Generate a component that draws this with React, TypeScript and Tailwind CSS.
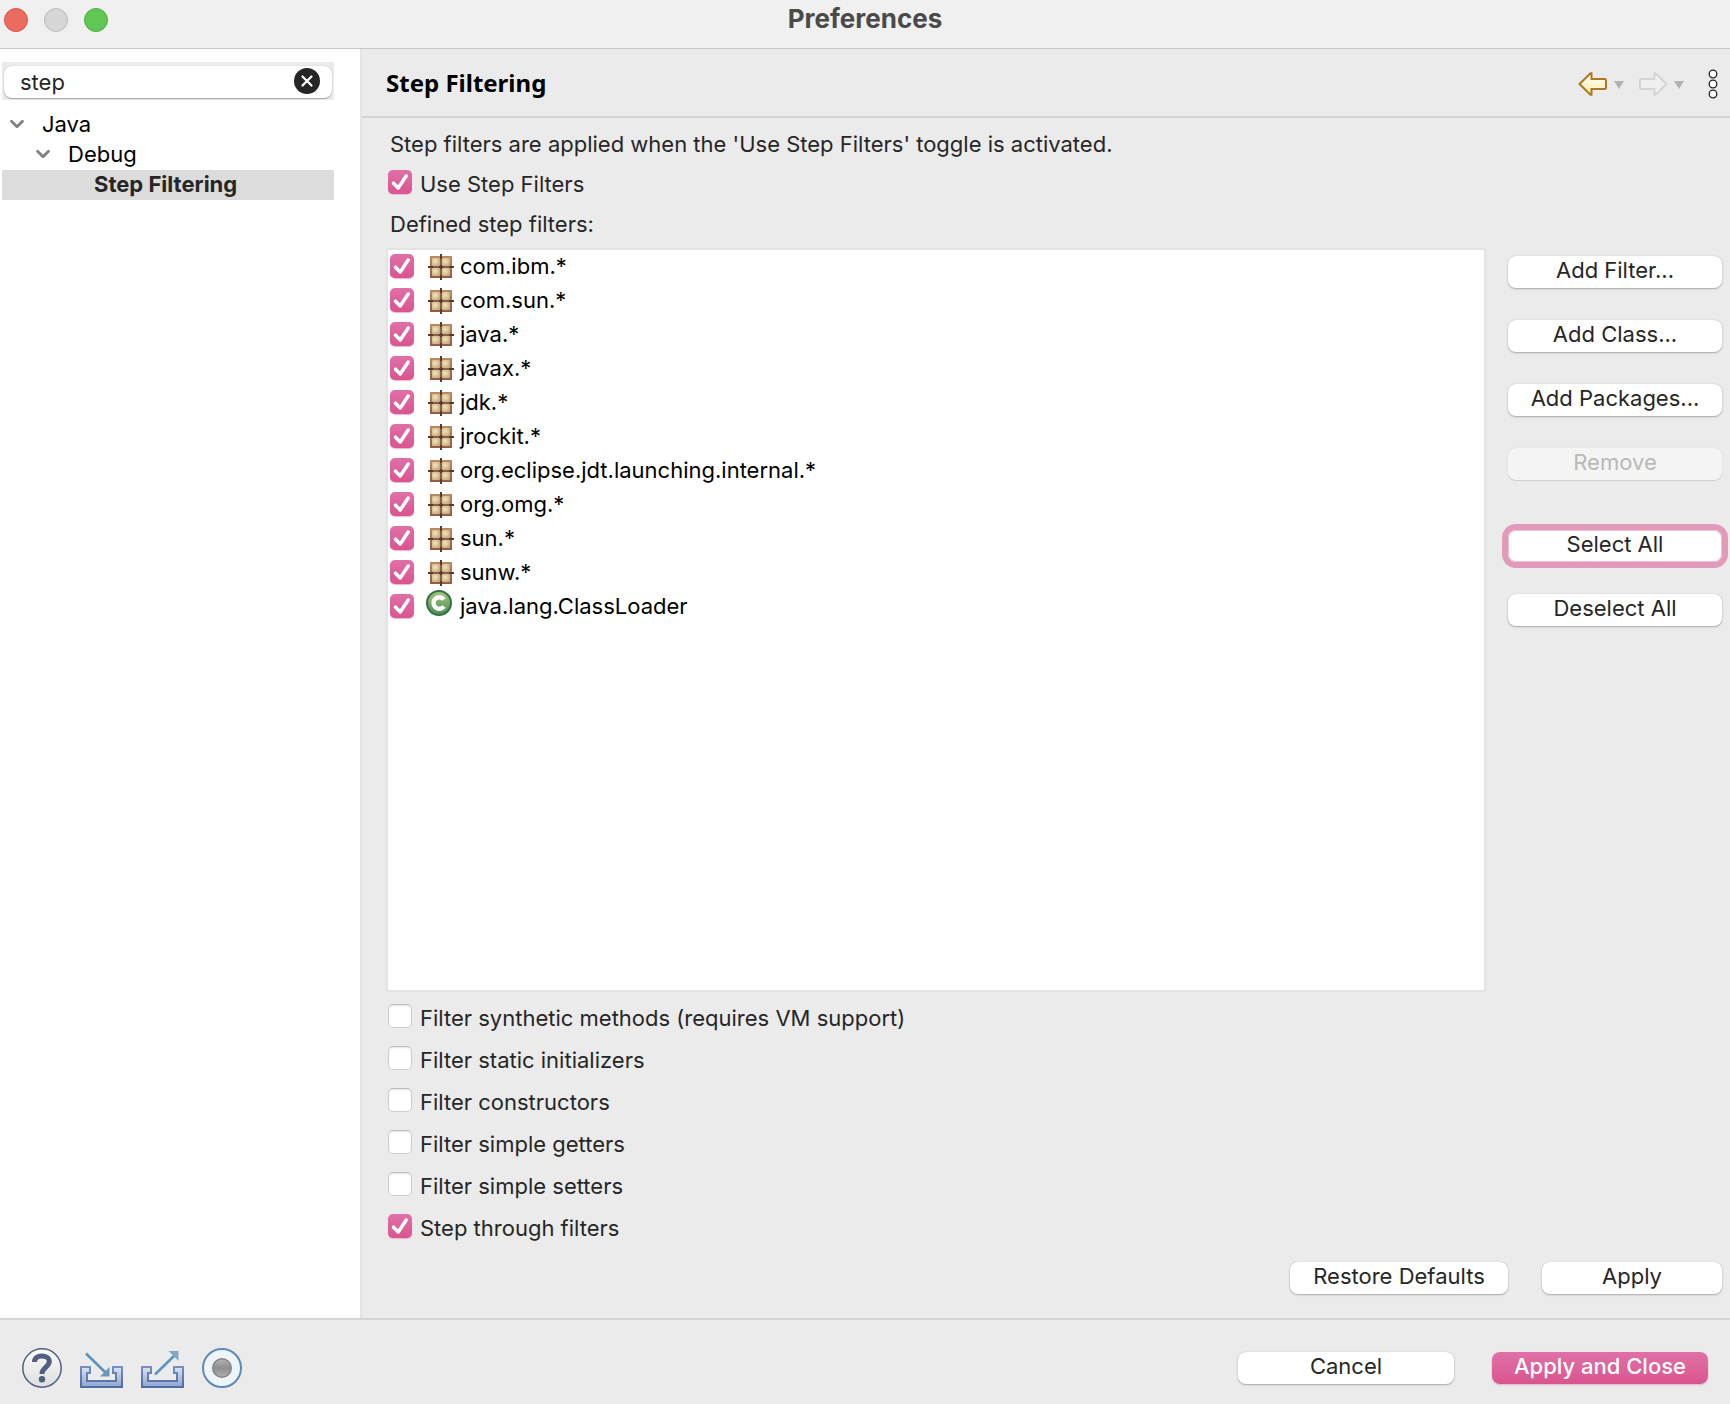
import React, { useState } from "react";
import { ChevronDown, X } from "lucide-react";
import clsx from "clsx";

type StepFilter = {
  name: string;
  kind: "package" | "class";
  checked: boolean;
};

type Option = {
  id: string;
  label: string;
  checked: boolean;
};

const initialFilters: StepFilter[] = [
  { name: "com.ibm.*", kind: "package", checked: true },
  { name: "com.sun.*", kind: "package", checked: true },
  { name: "java.*", kind: "package", checked: true },
  { name: "javax.*", kind: "package", checked: true },
  { name: "jdk.*", kind: "package", checked: true },
  { name: "jrockit.*", kind: "package", checked: true },
  { name: "org.eclipse.jdt.launching.internal.*", kind: "package", checked: true },
  { name: "org.omg.*", kind: "package", checked: true },
  { name: "sun.*", kind: "package", checked: true },
  { name: "sunw.*", kind: "package", checked: true },
  { name: "java.lang.ClassLoader", kind: "class", checked: true },
];

const initialOptions: Option[] = [
  { id: "synthetic", label: "Filter synthetic methods (requires VM support)", checked: false },
  { id: "static", label: "Filter static initializers", checked: false },
  { id: "constructors", label: "Filter constructors", checked: false },
  { id: "getters", label: "Filter simple getters", checked: false },
  { id: "setters", label: "Filter simple setters", checked: false },
  { id: "through", label: "Step through filters", checked: true },
];

const PackageIcon = () => (
  <svg viewBox="0 0 32 32" className="size-8 shrink-0" aria-hidden="true">
    <defs>
      <linearGradient id="pkg-frame" x1="0" y1="0" x2="0" y2="1">
        <stop offset="0" stopColor="#bb8a64" />
        <stop offset="1" stopColor="#905c47" />
      </linearGradient>
      <radialGradient id="pkg-cell" cx="0.4" cy="0.4" r="0.7">
        <stop offset="0" stopColor="#f2e7b9" />
        <stop offset="1" stopColor="#c4a679" />
      </radialGradient>
    </defs>
    <rect x="4" y="6" width="22" height="22" fill="url(#pkg-frame)" />
    <rect x="6" y="8" width="8" height="8" fill="url(#pkg-cell)" />
    <rect x="16" y="8" width="8" height="8" fill="url(#pkg-cell)" />
    <rect x="6" y="18" width="8" height="8" fill="url(#pkg-cell)" />
    <rect x="16" y="18" width="8" height="8" fill="url(#pkg-cell)" />
    <path d="M15 6v22M4 17h22" stroke="#85604a" strokeWidth="2" />
    <path d="M15 4v5M15 25v5M2 17h5M23 17h5M13 17h4M15 15v4" stroke="#5a3a2e" strokeWidth="2" />
  </svg>
);

const ClassIcon = () => (
  <svg viewBox="0 0 32 32" className="size-8 shrink-0" aria-hidden="true">
    <defs>
      <linearGradient id="class-fill" x1="0" y1="0" x2="0" y2="1">
        <stop offset="0" stopColor="#a5c77c" />
        <stop offset="1" stopColor="#4d8c56" />
      </linearGradient>
    </defs>
    <circle cx="13" cy="13" r="12" fill="url(#class-fill)" stroke="#33704a" strokeWidth="2" />
    <path d="M18 9.5A5.800 5.800 0 1 0 18 16.500" fill="none" stroke="#fff" strokeWidth="4.400" />
  </svg>
);

const BackIcon = () => (
  <svg viewBox="0 0 30 24" className="h-6 w-[30px]" aria-hidden="true">
    <defs>
      <linearGradient id="back-fill" x1="0" y1="0" x2="0" y2="1">
        <stop offset="0" stopColor="#fffef2" />
        <stop offset="1" stopColor="#fbeeb4" />
      </linearGradient>
    </defs>
    <path
      d="M1.5 12 12.5 1.2h1V7H26.5q1.5 0 1.5 1.5v7q0 1.5-1.5 1.5H13.500v5.800h-1z"
      fill="url(#back-fill)"
      stroke="#ad7720"
      strokeWidth="2"
    />
  </svg>
);

const ForwardIcon = () => (
  <svg viewBox="0 0 30 24" className="h-6 w-[30px]" aria-hidden="true">
    <path
      d="M28.5 12 17.5 1.2h-1V7H3.500Q2 7 2 8.500v7Q2 17 3.500 17H16.500v5.800h1z"
      fill="#efefef"
      stroke="#d4d4d4"
      strokeWidth="2"
    />
  </svg>
);

const TriangleIcon = () => (
  <svg viewBox="0 0 10 8" className="mt-[3px] h-2 w-2.5" aria-hidden="true">
    <path d="M0 0h10L5 8z" fill="#b2b2b2" />
  </svg>
);

const MenuDotsIcon = () => (
  <svg viewBox="0 0 10 30" className="h-[30px] w-2.5" aria-hidden="true">
    <g fill="#fff" stroke="#222" strokeWidth="1.3">
      <circle cx="5" cy="5" r="3.8" />
      <circle cx="5" cy="15" r="3.8" />
      <circle cx="5" cy="25" r="3.8" />
    </g>
  </svg>
);

const HelpIcon = () => (
  <svg viewBox="0 0 40 40" className="size-10" aria-hidden="true">
    <defs>
      <linearGradient id="help-fill" x1="0" y1="0" x2="0" y2="1">
        <stop offset="0" stopColor="#fbfbfb" />
        <stop offset="1" stopColor="#dedede" />
      </linearGradient>
    </defs>
    <circle cx="20" cy="20" r="19.2" fill="url(#help-fill)" stroke="#525f80" strokeWidth="1.5" />
    <path
      d="M12.500 14C12.500 10 15.500 8 19.800 8c4.400 0 7.500 2 7.500 5.600 0 5.400-7.300 5.800-7.300 12.400"
      fill="none"
      stroke="#525f80"
      strokeWidth="5"
    />
    <circle cx="20" cy="31.2" r="3.2" fill="#525f80" />
  </svg>
);

const TrayIcon = ({ direction }: { direction: "in" | "out" }) => (
  <svg viewBox="0 0 43 40" className="h-10 w-[43px]" aria-hidden="true">
    <defs>
      <linearGradient id="tray-fill" x1="0" y1="0" x2="0" y2="1">
        <stop offset="0" stopColor="#dbe3f1" />
        <stop offset="1" stopColor="#8fa4cf" />
      </linearGradient>
      <linearGradient id="tray-edge" x1="0" y1="0" x2="0" y2="1">
        <stop offset="0" stopColor="#788ebf" />
        <stop offset="1" stopColor="#4f6ba4" />
      </linearGradient>
    </defs>
    <path
      d="M1 19h9v6H7V33H36V25H33V19h9v20H1z"
      fill="url(#tray-fill)"
      stroke="url(#tray-edge)"
      strokeWidth="2"
    />
    {direction === "in" ? (
      <>
        <path d="M6 5.500 26 25" stroke="#5a92c2" strokeWidth="2.500" />
        <path d="M29.500 28.500V19L20 28.500z" fill="#6e97b8" />
      </>
    ) : (
      <>
        <path d="M14 26.500 34 7" stroke="#5a92c2" strokeWidth="2.500" />
        <path d="M37.500 3v10L27.500 3z" fill="#83a8c4" />
      </>
    )}
  </svg>
);

const RecordIcon = () => (
  <svg viewBox="0 0 40 40" className="size-10" aria-hidden="true">
    <defs>
      <linearGradient id="record-fill" x1="0" y1="0" x2="0" y2="1">
        <stop offset="0" stopColor="#b5b5b5" />
        <stop offset="0.5" stopColor="#8e8e8e" />
        <stop offset="1" stopColor="#b0b0b0" />
      </linearGradient>
    </defs>
    <circle cx="20" cy="20" r="19" fill="#eef5fa" stroke="#5f88b3" strokeWidth="2" />
    <circle cx="20" cy="20" r="9.3" fill="url(#record-fill)" stroke="#858585" strokeWidth="1.5" />
  </svg>
);

type CheckboxProps = {
  id: string;
  checked: boolean;
  onChange: () => void;
};

const Checkbox: React.FC<CheckboxProps> = ({ id, checked, onChange }) => (
  <span className="grid size-6 shrink-0 place-items-center">
    <input
      id={id}
      type="checkbox"
      checked={checked}
      onChange={onChange}
      className="col-start-1 row-start-1 size-6 appearance-none rounded-[5px] border border-[#cfcfcf] border-t-[#bdbdbd] bg-white shadow-[inset_0_1px_2px_#e2e2e2] checked:border-0 checked:bg-linear-to-b checked:from-[#e070a7] checked:to-[#d9548f] checked:shadow-[0_1px_1px_#e9b5cf]"
    />
    {checked && (
      <svg viewBox="0 0 24 24" className="pointer-events-none col-start-1 row-start-1 size-6" aria-hidden="true">
        <path
          d="M5.500 13.200 10.200 18 18.200 6"
          fill="none"
          stroke="#fff"
          strokeWidth="3.500"
          strokeLinecap="round"
          strokeLinejoin="round"
        />
      </svg>
    )}
  </span>
);

type PushButtonProps = React.ButtonHTMLAttributes<HTMLButtonElement> & {
  primary?: boolean;
  focused?: boolean;
};

const PushButton: React.FC<PushButtonProps> = ({ primary, focused, className, ...rest }) => (
  <button
    type="button"
    className={clsx(
      "h-8 rounded-lg pb-1 text-[22px] leading-7",
      primary
        ? "bg-linear-to-b from-[#e070a7] to-[#d9548f] font-medium text-white shadow-[0_1px_2px_#d9b3c6]"
        : "bg-white text-[#262626] disabled:bg-[#f4f4f4] disabled:text-[#b8b8b8]",
      !primary && !focused && "shadow-[0_0_1px_#b0b0b0,0_1px_2px_#a8a8a8] disabled:shadow-[0_0_1px_#c8c8c8,0_1px_1px_#cfcfcf]",
      focused && "shadow-[inset_0_0_0_1px_#efbdd5] ring-6 ring-[#e29aba]",
      className
    )}
    {...rest}
  />
);

export default function App() {
  const [query, setQuery] = useState("step");
  const [useFilters, setUseFilters] = useState(true);
  const [filters, setFilters] = useState(initialFilters);
  const [options, setOptions] = useState(initialOptions);

  const setAll = (checked: boolean) => setFilters(filters.map((f) => ({ ...f, checked })));

  const toggleFilter = (name: string) =>
    setFilters(filters.map((f) => (f.name === name ? { ...f, checked: !f.checked } : f)));

  const toggleOption = (id: string) =>
    setOptions(options.map((o) => (o.id === id ? { ...o, checked: !o.checked } : o)));

  return (
    <div className="flex min-h-screen flex-col bg-[#ebebeb] font-['Inter',sans-serif] text-[22px] leading-7 text-[#262626]">
      <header className="grid h-[49px] grid-cols-[1fr_auto_1fr] items-start border-b border-[#c8c8c8] bg-[#f0f0f0]">
        <div className="flex gap-4 pt-2 pl-1">
          <button type="button" aria-label="Close" className="size-6 rounded-full border border-[#d2524a] bg-[#ec6b5f]" />
          <button type="button" aria-label="Minimize" className="size-6 rounded-full border border-[#b9b9b9] bg-[#d6d6d6]" />
          <button type="button" aria-label="Zoom" className="size-6 rounded-full border border-[#4cae3d] bg-[#62c655]" />
        </div>
        <h1 className="pt-[3px] text-[26px] leading-8 font-bold text-[#4a4a4a]">Preferences</h1>
      </header>

      <div className="flex flex-1">
        <aside className="w-[362px] shrink-0 border-r-2 border-[#e4e4e4] bg-white px-[2px] pt-[13px]">
          <div className="mr-6 bg-[#ebebeb] px-[2px] pt-1 pb-[2px]">
            <div className="flex h-8 items-center rounded-lg bg-white pr-3 pl-4 shadow-[0_0_1px_#a8a8a8,0_1px_1px_#a8a8a8]">
              <input
                type="text"
                aria-label="Filter preferences"
                value={query}
                onChange={(e) => setQuery(e.target.value)}
                className="min-w-0 flex-1 bg-transparent outline-none"
              />
              <button
                type="button"
                aria-label="Clear"
                onClick={() => setQuery("")}
                className="mb-[2px] flex size-[26px] items-center justify-center rounded-full bg-[#262626] text-white"
              >
                <X size={18} strokeWidth={3} />
              </button>
            </div>
          </div>

          <ul className="mt-2.5 mr-6 text-black">
            <li>
              <div className="flex h-[30px] items-center gap-3.5 pb-[2px] pl-1">
                <ChevronDown size={22} strokeWidth={3} className="text-[#808080]" />
                Java
              </div>
              <ul>
                <li>
                  <div className="flex h-[30px] items-center gap-3.5 pb-[2px] pl-[30px]">
                    <ChevronDown size={22} strokeWidth={3} className="text-[#808080]" />
                    Debug
                  </div>
                  <ul>
                    <li className="h-[30px] bg-[#dcdcdc] pb-[2px] pl-[92px] font-bold text-[#262626]">Step Filtering</li>
                  </ul>
                </li>
              </ul>
            </li>
          </ul>
        </aside>

        <main className="flex min-w-0 flex-1 flex-col">
          <div className="flex h-[69px] items-center justify-between border-b-2 border-[#d4d4d4] pr-3 pl-6">
            <h2 className="font-['Noto_Sans',sans-serif] text-2xl leading-8 font-bold text-black">Step Filtering</h2>
            <div className="flex items-center pt-[2px]">
              <button type="button" aria-label="Back">
                <BackIcon />
              </button>
              <button type="button" aria-label="Back history" className="ml-1.5">
                <TriangleIcon />
              </button>
              <button type="button" aria-label="Forward" disabled className="ml-3.5">
                <ForwardIcon />
              </button>
              <button type="button" aria-label="Forward history" className="ml-1.5">
                <TriangleIcon />
              </button>
              <button type="button" aria-label="View menu" className="ml-6">
                <MenuDotsIcon />
              </button>
            </div>
          </div>

          <div className="flex flex-1 flex-col pt-3 pr-2 pb-6 pl-6">
            <p className="pl-1">Step filters are applied when the 'Use Step Filters' toggle is activated.</p>

            <div className="mt-3 flex items-start gap-2 pl-[2px]">
              <Checkbox id="use-filters" checked={useFilters} onChange={() => setUseFilters(!useFilters)} />
              <label htmlFor="use-filters">Use Step Filters</label>
            </div>

            <p className="mt-3 pl-1">Defined step filters:</p>

            <div className="mt-2.5 flex flex-1 gap-[22px]">
              <ul className="min-w-0 flex-1 border-2 border-[#e3e3e3] bg-white pl-[2px] text-black">
                {filters.map((filter) => (
                  <li key={filter.name} className="flex h-[34px] items-center pb-[2px]">
                    <Checkbox
                      id={`filter-${filter.name}`}
                      checked={filter.checked}
                      onChange={() => toggleFilter(filter.name)}
                    />
                    <label htmlFor={`filter-${filter.name}`} className="ml-3 flex items-center gap-[2px]">
                      {filter.kind === "package" ? <PackageIcon /> : <ClassIcon />}
                      {filter.name}
                    </label>
                  </li>
                ))}
              </ul>

              <div className="flex w-[214px] shrink-0 flex-col gap-8 pt-2">
                <PushButton>Add Filter...</PushButton>
                <PushButton>Add Class...</PushButton>
                <PushButton>Add Packages...</PushButton>
                <PushButton disabled>Remove</PushButton>
                <PushButton focused className="mt-[18px]" onClick={() => setAll(true)}>
                  Select All
                </PushButton>
                <PushButton onClick={() => setAll(false)}>Deselect All</PushButton>
              </div>
            </div>

            <div className="mt-3 flex flex-col gap-3.5 pl-[2px]">
              {options.map((option) => (
                <div key={option.id} className="flex items-start gap-2">
                  <Checkbox id={option.id} checked={option.checked} onChange={() => toggleOption(option.id)} />
                  <label htmlFor={option.id}>{option.label}</label>
                </div>
              ))}
            </div>

            <div className="mt-5 flex justify-end gap-[34px]">
              <PushButton className="w-[218px]">Restore Defaults</PushButton>
              <PushButton className="w-[180px]">Apply</PushButton>
            </div>
          </div>
        </main>
      </div>

      <footer className="flex h-[86px] items-center justify-between border-t-2 border-[#d4d4d4] px-[22px] pt-3">
        <div className="flex items-center gap-[18px]">
          <button type="button" aria-label="Help">
            <HelpIcon />
          </button>
          <button type="button" aria-label="Import preferences">
            <TrayIcon direction="in" />
          </button>
          <button type="button" aria-label="Export preferences">
            <TrayIcon direction="out" />
          </button>
          <button type="button" aria-label="Record preferences">
            <RecordIcon />
          </button>
        </div>
        <div className="flex gap-[38px]">
          <PushButton className="w-[216px]">Cancel</PushButton>
          <PushButton primary className="w-[216px]">
            Apply and Close
          </PushButton>
        </div>
      </footer>
    </div>
  );
}
